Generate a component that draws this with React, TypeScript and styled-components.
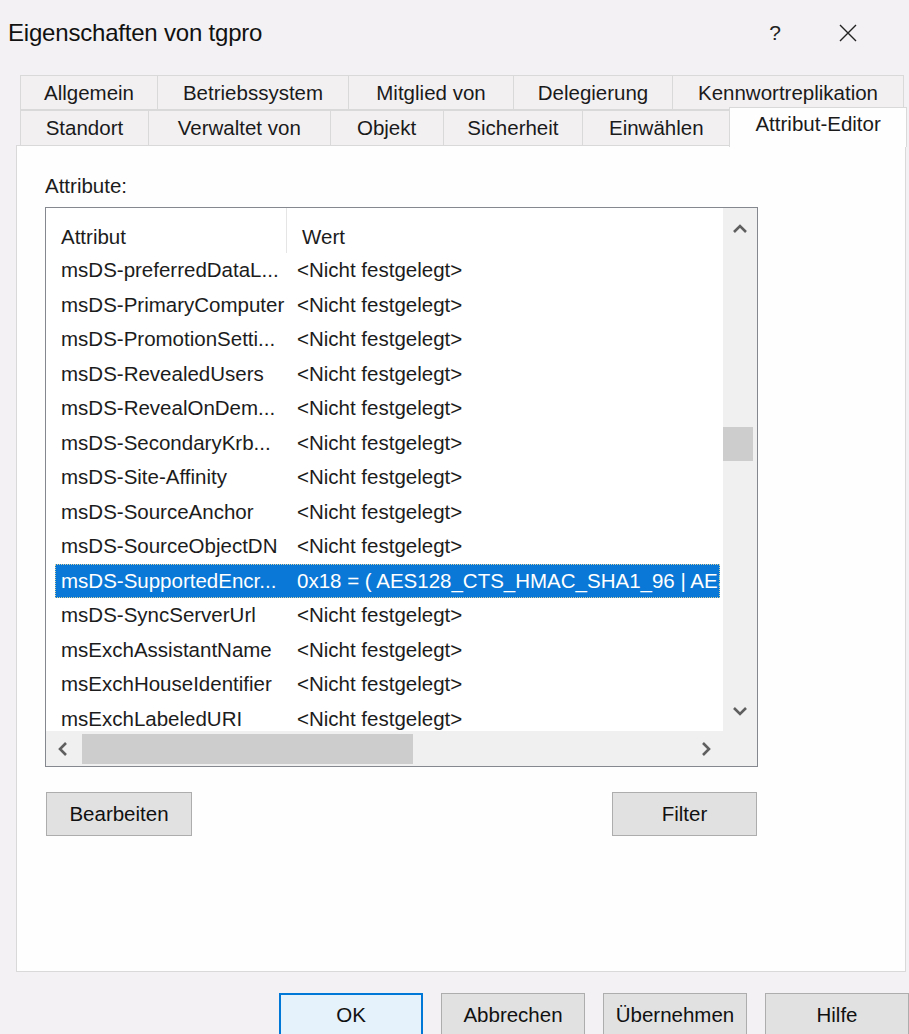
import React from "react";
import styled, { createGlobalStyle } from "styled-components";

const GlobalStyle = createGlobalStyle`
  html, body {
    margin: 0;
    padding: 0;
  }
  body {
    background: #f3f1f3;
    font-family: "Segoe UI", "Liberation Sans", Arial, sans-serif;
    color: #1c1c1c;
  }
`;

const Dialog = styled.div`
  width: 909px;
  height: 1034px;
  overflow: hidden;
  display: flex;
  flex-direction: column;
  background: #f3f1f3;
  font-size: 20.5px;

  & > * {
    flex-shrink: 0;
  }
`;

const TitleBar = styled.div`
  height: 66px;
  display: flex;
  align-items: center;
  padding-left: 8px;
`;

const Title = styled.div`
  flex: 1;
  font-size: 24px;
  letter-spacing: -0.2px;
  color: #111;
`;

const CaptionButton = styled.div<{ $w: number; $gap?: number }>`
  width: ${(p) => p.$w}px;
  height: 40px;
  margin-left: ${(p) => p.$gap ?? 0}px;
  display: flex;
  align-items: center;
  justify-content: center;
  font-size: 21px;
  color: #222;
`;

const TabStrip = styled.div`
  margin: 9px 2px 0 20px;
  display: flex;
  flex-direction: column;
`;

const TabRow = styled.div<{ $h: number }>`
  display: flex;
  align-items: flex-end;
  height: ${(p) => p.$h}px;
`;

const Tab = styled.div<{ $w: number; $active?: boolean }>`
  box-sizing: border-box;
  width: ${(p) => p.$w}px;
  height: ${(p) => (p.$active ? "calc(100% + 4px)" : "100%")};
  margin-left: -1px;
  margin-bottom: ${(p) => (p.$active ? "-1px" : "0")};
  display: flex;
  align-items: center;
  justify-content: center;
  padding-bottom: ${(p) => (p.$active ? "8px" : "0")};
  background: ${(p) => (p.$active ? "#fefefe" : "#f3f0f2")};
  border: 1px solid #d9d9d9;
  border-bottom: ${(p) => (p.$active ? "none" : "1px solid #d9d9d9")};
  z-index: ${(p) => (p.$active ? 1 : 0)};
  white-space: nowrap;
  color: #1a1a1a;

  &:first-child {
    margin-left: 0;
  }
`;

const Panel = styled.div`
  margin: -1px 3px 0 16px;
  height: 827px;
  box-sizing: border-box;
  background: #fefefe;
  border: 1px solid #d9d9d9;
  padding: 28px 0 0 28px;
  display: flex;
  flex-direction: column;
`;

const Label = styled.div`
  line-height: 24px;
  height: 24px;
`;

const Content = styled.div`
  width: 713px;
  margin-top: 9px;
  display: flex;
  flex-direction: column;
`;

const ListBox = styled.div`
  box-sizing: border-box;
  height: 560px;
  border: 1px solid #868890;
  background: #fff;
  display: grid;
  grid-template-columns: 1fr 34px;
  grid-template-rows: 1fr 35px;
`;

const Columns = styled.div`
  overflow: hidden;
  display: flex;
  flex-direction: column;
`;

const Header = styled.div`
  height: 45px;
  flex-shrink: 0;
  display: flex;
`;

const HeaderCell = styled.div<{ $w?: number }>`
  width: ${(p) => (p.$w ? `${p.$w}px` : "auto")};
  flex: ${(p) => (p.$w ? "none" : 1)};
  box-sizing: border-box;
  padding: 12px 0 0 15px;
  display: flex;
  align-items: center;
  border-right: ${(p) => (p.$w ? "1px solid #e5e5e5" : "none")};
`;

const Row = styled.div<{ $selected?: boolean }>`
  height: 34.5px;
  flex-shrink: 0;
  margin: 0 3px 0 9px;
  display: flex;
  align-items: center;
  white-space: nowrap;
  overflow: hidden;
  background: ${(p) => (p.$selected ? "#0a78d6" : "transparent")};
  color: ${(p) => (p.$selected ? "#fff" : "#1c1c1c")};
  outline: ${(p) => (p.$selected ? "1px dotted #d8d2a0" : "none")};
  outline-offset: -1px;
`;

const NameCell = styled.div`
  width: 232px;
  flex: none;
  padding-left: 6px;
  box-sizing: border-box;
  overflow: hidden;
`;

const ValueCell = styled.div`
  padding-left: 10px;
  overflow: hidden;
  text-overflow: clip;
`;

const ScrollTrack = styled.div<{ $vertical?: boolean }>`
  background: #f0f0f0;
  display: flex;
  flex-direction: ${(p) => (p.$vertical ? "column" : "row")};
  align-items: stretch;
`;

const ArrowButton = styled.div<{ $size: number; $vertical?: boolean }>`
  flex: none;
  ${(p) => (p.$vertical ? `height: ${p.$size}px;` : `width: ${p.$size}px;`)}
  display: flex;
  align-items: center;
  justify-content: center;
`;

const TrackSpace = styled.div<{ $vertical?: boolean }>`
  flex: 1;
  display: flex;
  flex-direction: ${(p) => (p.$vertical ? "column" : "row")};
  align-items: ${(p) => (p.$vertical ? "flex-start" : "center")};
`;

const Thumb = styled.div<{ $vertical?: boolean; $start: number; $length: number }>`
  background: #cdcdcd;
  flex: none;
  ${(p) =>
    p.$vertical
      ? `margin-top: ${p.$start}px; height: ${p.$length}px; width: 30px;`
      : `margin-left: ${p.$start}px; width: ${p.$length}px; height: 30px;`}
`;

const Corner = styled.div`
  background: #f0f0f0;
`;

const ActionRow = styled.div`
  margin-top: 25px;
  padding: 0 1px;
  display: flex;
  justify-content: space-between;
`;

const Button = styled.div<{ $default?: boolean; $w: number }>`
  box-sizing: border-box;
  width: ${(p) => p.$w}px;
  height: 44px;
  flex: none;
  display: flex;
  align-items: center;
  justify-content: center;
  background: ${(p) => (p.$default ? "#e5f1fb" : "#e1e1e1")};
  border: ${(p) => (p.$default ? "2px solid #0078d7" : "1px solid #adadad")};
  color: #111;
`;

const Footer = styled.div`
  margin-top: 21px;
  display: flex;
  justify-content: flex-end;
  gap: 18px;
`;

const Chevron = ({ dir }: { dir: "up" | "down" | "left" | "right" }) => {
  const pts = {
    up: "2,9 8,3 14,9",
    down: "2,3 8,9 14,3",
    left: "9,2 3,8 9,14",
    right: "3,2 9,8 3,14",
  }[dir];
  const vertical = dir === "up" || dir === "down";
  return (
    <svg
      width={vertical ? 16 : 12}
      height={vertical ? 12 : 16}
      viewBox={vertical ? "0 0 16 12" : "0 0 12 16"}
    >
      <polyline points={pts} fill="none" stroke="#5f5f5f" strokeWidth="2.6" />
    </svg>
  );
};

const CloseGlyph = () => (
  <svg width="20" height="20" viewBox="0 0 20 20">
    <path d="M2 2 L18 18 M18 2 L2 18" stroke="#222" strokeWidth="1.4" />
  </svg>
);

const topTabs = [
  { label: "Allgemein", w: 138 },
  { label: "Betriebssystem", w: 192 },
  { label: "Mitglied von", w: 166 },
  { label: "Delegierung", w: 160 },
  { label: "Kennwortreplikation", w: 232 },
];

const bottomTabs = [
  { label: "Standort", w: 129 },
  { label: "Verwaltet von", w: 183 },
  { label: "Objekt", w: 114 },
  { label: "Sicherheit", w: 141 },
  { label: "Einwählen", w: 148 },
  { label: "Attribut-Editor", w: 178, active: true },
];

const unset = "<Nicht festgelegt>";

const attributes = [
  { name: "msDS-preferredDataL...", value: unset },
  { name: "msDS-PrimaryComputer", value: unset },
  { name: "msDS-PromotionSetti...", value: unset },
  { name: "msDS-RevealedUsers", value: unset },
  { name: "msDS-RevealOnDem...", value: unset },
  { name: "msDS-SecondaryKrb...", value: unset },
  { name: "msDS-Site-Affinity", value: unset },
  { name: "msDS-SourceAnchor", value: unset },
  { name: "msDS-SourceObjectDN", value: unset },
  {
    name: "msDS-SupportedEncr...",
    value: "0x18 = ( AES128_CTS_HMAC_SHA1_96 | AES256_CTS_HMAC_SHA1_96 )",
    selected: true,
  },
  { name: "msDS-SyncServerUrl", value: unset },
  { name: "msExchAssistantName", value: unset },
  { name: "msExchHouseIdentifier", value: unset },
  { name: "msExchLabeledURI", value: unset },
];

const App = () => {
  return (
    <Dialog>
      <GlobalStyle />
      <TitleBar>
        <Title>Eigenschaften von tgpro</Title>
        <CaptionButton $w={40}>?</CaptionButton>
        <CaptionButton $w={36} $gap={35}>
          <CloseGlyph />
        </CaptionButton>
        <CaptionButton $w={43} />
      </TitleBar>

      <TabStrip>
        <TabRow $h={35}>
          {topTabs.map((t) => (
            <Tab key={t.label} $w={t.w}>
              {t.label}
            </Tab>
          ))}
        </TabRow>
        <TabRow $h={36}>
          {bottomTabs.map((t) => (
            <Tab key={t.label} $w={t.w} $active={t.active}>
              {t.label}
            </Tab>
          ))}
        </TabRow>
      </TabStrip>

      <Panel>
        <Label>Attribute:</Label>
        <Content>
          <ListBox>
            <Columns>
              <Header>
                <HeaderCell $w={241}>Attribut</HeaderCell>
                <HeaderCell>Wert</HeaderCell>
              </Header>
              {attributes.map((a) => (
                <Row key={a.name} $selected={a.selected}>
                  <NameCell>{a.name}</NameCell>
                  <ValueCell>{a.value}</ValueCell>
                </Row>
              ))}
            </Columns>

            <ScrollTrack $vertical>
              <ArrowButton $vertical $size={42}>
                <Chevron dir="up" />
              </ArrowButton>
              <TrackSpace $vertical>
                <Thumb $vertical $start={177} $length={34} />
              </TrackSpace>
              <ArrowButton $vertical $size={40}>
                <Chevron dir="down" />
              </ArrowButton>
            </ScrollTrack>

            <ScrollTrack>
              <ArrowButton $size={34}>
                <Chevron dir="left" />
              </ArrowButton>
              <TrackSpace>
                <Thumb $start={2} $length={331} />
              </TrackSpace>
              <ArrowButton $size={34}>
                <Chevron dir="right" />
              </ArrowButton>
            </ScrollTrack>
            <Corner />
          </ListBox>

          <ActionRow>
            <Button $w={146}>Bearbeiten</Button>
            <Button $w={145}>Filter</Button>
          </ActionRow>
        </Content>
      </Panel>

      <Footer>
        <Button $w={144} $default>
          OK
        </Button>
        <Button $w={144}>Abbrechen</Button>
        <Button $w={144}>Übernehmen</Button>
        <Button $w={144}>Hilfe</Button>
      </Footer>
    </Dialog>
  );
};

export default App;
